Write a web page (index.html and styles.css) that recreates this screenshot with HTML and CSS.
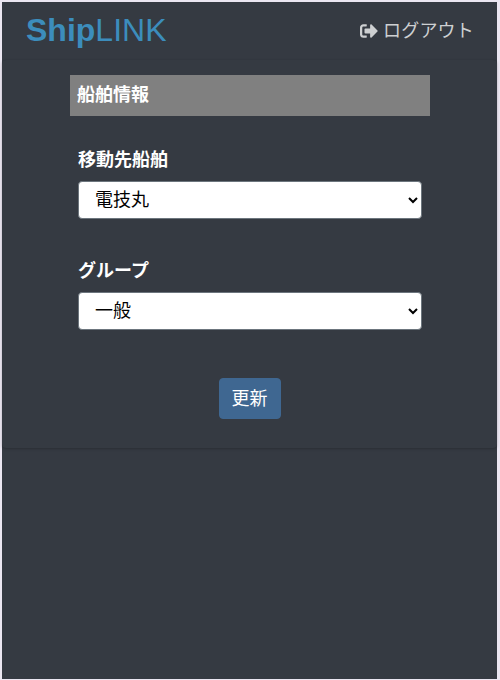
FILE: index.html
```html
<!DOCTYPE html>
<html lang="ja">
<head>
    <meta charset="UTF-8">
    <meta name="viewport" content="width=device-width, initial-scale=1.0">
    <title>ShipLINK</title>
    <link rel="stylesheet" href="styles.css">
</head>
<body>
    <div class="wrapper">
        <header class="navbar">
            <a href="#" class="brand"><b>Ship</b>LINK</a>
            <a href="#" class="logout">
                <svg class="logout-icon" viewBox="0 0 512 512" aria-hidden="true">
                    <path fill="currentColor" d="M497 273L329 441c-15 15-41 4.500-41-17v-96H152c-13.300 0-24-10.700-24-24v-96c0-13.300 10.700-24 24-24h136V88c0-21.400 25.900-32 41-17l168 168c9.300 9.400 9.300 24.600 0 34zM192 436v-40c0-6.600-5.400-12-12-12H96c-17.700 0-32-14.300-32-32V160c0-17.700 14.300-32 32-32h84c6.600 0 12-5.400 12-12V76c0-6.600-5.400-12-12-12H96c-53 0-96 43-96 96v192c0 53 43 96 96 96h84c6.600 0 12-5.400 12-12z"/>
                </svg>
                <span>ログアウト</span>
            </a>
        </header>

        <main class="card">
            <h1 class="card-title">船舶情報</h1>
            <form action="#" method="post">
                <div class="form-group">
                    <label for="ship">移動先船舶</label>
                    <select id="ship" name="ship" class="form-control">
                        <option selected>電技丸</option>
                    </select>
                </div>
                <div class="form-group">
                    <label for="group">グループ</label>
                    <select id="group" name="group" class="form-control">
                        <option selected>一般</option>
                    </select>
                </div>
                <button type="submit" class="btn">更新</button>
            </form>
        </main>
    </div>
</body>
</html>
```

FILE: styles.css
```css
* {
    box-sizing: border-box;
}

body {
    margin: 0;
    height: 100vh;
    padding: 2px 3px 1px 2px;
    overflow: hidden;
    background-color: #ebe6f1;
    color: #fff;
    font-family: "Liberation Sans", "Noto Sans CJK JP", sans-serif;
    font-size: 18px;
    line-height: 27px;
}

.wrapper {
    height: 100%;
    background-color: #353a42;
}

.navbar {
    display: flex;
    justify-content: space-between;
    align-items: center;
    height: 58px;
    padding: 0 23px 0 24px;
}

.navbar a {
    text-decoration: none;
}

.brand {
    padding-bottom: 2px;
    color: #3c8dbc;
    font-size: 32px;
    line-height: 48px;
}

.logout {
    display: flex;
    align-items: center;
    gap: 5px;
    color: #ced0d2;
    letter-spacing: 0.2px;
}

.logout-icon {
    width: 18px;
    height: 18px;
    margin-bottom: 1px;
}

.card {
    height: 388px;
    padding: 15px 67px 0 68px;
    border-radius: 4px;
    box-shadow: 0 0 1px rgba(0, 0, 0, 0.125), 0 1px 3px rgba(0, 0, 0, 0.2);
}

.card-title {
    margin: 0 0 31px;
    padding: 7px;
    background-color: #808080;
    font-size: 18px;
    line-height: 27px;
}

.form-group {
    margin: 0 8px 39px;
}

label {
    display: block;
    margin-bottom: 7px;
    font-weight: bold;
}

.form-control {
    display: block;
    width: 100%;
    height: 38px;
    padding: 0 0 0 12px;
    border: 1px solid #6c757d;
    border-radius: 4px;
    background-color: #fff;
    color: #000;
    font-family: inherit;
    font-size: 18px;
}

.btn {
    display: block;
    width: 62px;
    height: 41px;
    margin: 48px auto 0;
    padding: 0 1px 4px 0;
    border: 1px solid #3f6791;
    border-radius: 4px;
    background-color: #3f6791;
    color: #fff;
    font-family: inherit;
    font-size: 18px;
    cursor: pointer;
}
```
